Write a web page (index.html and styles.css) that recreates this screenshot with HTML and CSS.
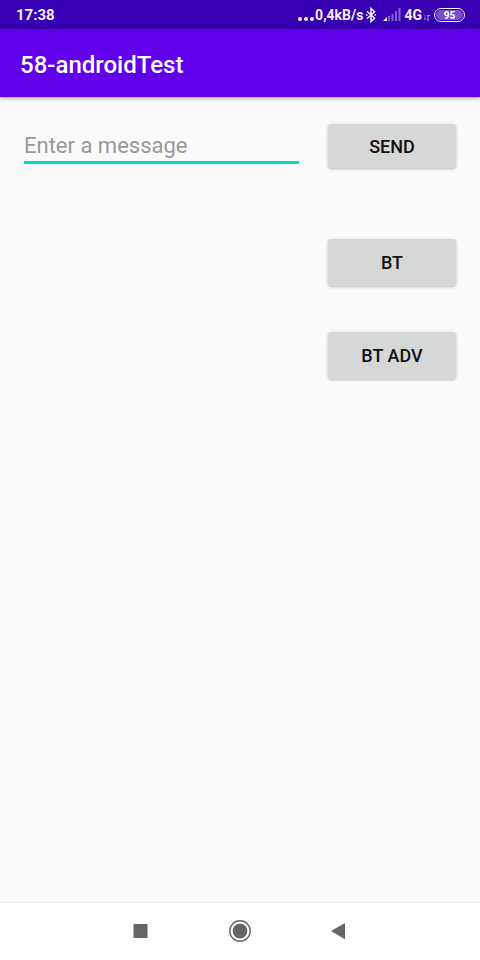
FILE: index.html
```html
<!DOCTYPE html>
<html lang="en">
<head>
<meta charset="utf-8">
<meta name="viewport" content="width=device-width, initial-scale=1">
<title>58-androidTest</title>
<link rel="stylesheet" href="styles.css">
</head>
<body>
<div class="status-bar">
  <span class="clock">17:38</span>
  <div class="indicators">
    <svg class="dots" width="16" height="6" viewBox="0 0 16 6" aria-hidden="true"><circle cx="2" cy="3" r="2"/><circle cx="8" cy="3" r="2"/><circle cx="14" cy="3" r="2"/></svg>
    <span>0,4kB/s</span>
    <svg class="bluetooth" width="10" height="16" viewBox="0 0 10 16" aria-hidden="true"><path d="M1 4.2 8.5 11.3 5 14.6V1.4l3.5 3.3L1 11.8"/><path d="M0 8h1.6M8.4 8H10"/></svg>
    <svg class="signal" width="18" height="13" viewBox="0 0 18 13" aria-hidden="true"><path d="M0 13 4 9v4z"/><path class="dim" d="M5 8h2v5H5zM8.500 6h2v7h-2zM12 3h2v10h-2zM15.500 0h2v13h-2z"/></svg>
    <span>4G</span>
    <svg class="traffic" width="6" height="7" viewBox="0 0 6 7" aria-hidden="true"><path class="dim" d="M1 1v5M0 5h2"/><path d="M4 7V1.5M3.5 1.5H6"/></svg>
    <span class="battery"><span class="battery-level">95</span></span>
  </div>
</div>
<header class="app-bar"><h1>58-androidTest</h1></header>
<main>
  <form class="message-row">
    <input class="message" type="text" placeholder="Enter a message" aria-label="Enter a message">
    <button class="send" type="button">SEND</button>
  </form>
  <div class="actions">
    <button type="button">BT</button>
    <button type="button">BT ADV</button>
  </div>
</main>
<nav class="system-nav" aria-label="System">
  <button type="button" aria-label="Recent apps"><svg width="24" height="24" viewBox="0 0 24 24"><path d="M4.500 5h14v14h-14z"/></svg></button>
  <button type="button" aria-label="Home"><svg width="24" height="24" viewBox="0 0 24 24"><circle cx="12" cy="12" r="7.4"/><circle class="ring" cx="12" cy="12" r="10.2"/></svg></button>
  <button type="button" aria-label="Back"><svg width="24" height="24" viewBox="0 0 24 24"><path d="M4 12 18 4v16.2z"/></svg></button>
</nav>
</body>
</html>
```
FILE: styles.css
```css
* {
  box-sizing: border-box;
}

body {
  display: flex;
  flex-direction: column;
  min-height: 100vh;
  margin: 0;
  background: #fafafa;
  color: #111;
  font-family: Roboto, "Liberation Sans", sans-serif;
}

.status-bar {
  display: flex;
  justify-content: space-between;
  align-items: center;
  height: 29px;
  padding: 0 15px 0 16px;
  background: #3700b3;
  color: #f3effb;
  font-size: 14px;
  font-weight: 700;
  line-height: 30px;
}

.clock {
  font-size: 15px;
}

.indicators {
  display: flex;
  align-items: center;
}

.indicators svg {
  fill: #f3effb;
}

.indicators .dim {
  opacity: 0.4;
}

.dots {
  margin: 8px 1px 0 0;
}

.bluetooth {
  margin: 0 7px 0 3px;
}

.bluetooth path {
  fill: none;
  stroke: #f3effb;
  stroke-width: 1.5;
}

.signal {
  margin-right: 3px;
}

.traffic {
  margin: 6px 4px 0 2px;
}

.traffic path {
  fill: none;
  stroke: #f3effb;
  opacity: 0.7;
}

.battery {
  display: flex;
  width: 31px;
  height: 14px;
  padding: 1px;
  border: 1px solid #f3effb;
  border-radius: 7px;
}

.battery-level {
  flex: 1;
  border-radius: 5px;
  background: #7950cc;
  color: #fff;
  font-size: 10px;
  font-weight: 700;
  line-height: 11px;
  text-align: center;
}

.app-bar {
  display: flex;
  align-items: center;
  height: 68px;
  padding: 3px 20px 0;
  background: #6200ee;
  box-shadow: 0 1px 4px rgba(0, 0, 0, 0.4);
  color: #fff;
}

h1 {
  margin: 0;
  font-size: 24px;
  font-weight: 500;
}

main {
  flex: 1;
  padding: 27px 24px;
}

.message-row {
  display: flex;
  align-items: flex-start;
  gap: 29px;
}

.message {
  flex: 1;
  min-width: 0;
  height: 40px;
  padding: 6px 0 0;
  border: 0;
  border-bottom: 3px solid #03dac5;
  border-radius: 0;
  outline: 0;
  background: transparent;
  color: #111;
  font: 400 22px Roboto, "Liberation Sans", sans-serif;
}

.message::placeholder {
  color: #999;
  opacity: 1;
}

main button {
  width: 128px;
  height: 47px;
  padding: 0;
  border: 0;
  border-radius: 3px;
  background: #d6d7d7;
  box-shadow: 0 1px 3px rgba(0, 0, 0, 0.25);
  color: #111;
  font: 500 18px Roboto, "Liberation Sans", sans-serif;
}

main .send {
  height: 44px;
}

.actions {
  display: flex;
  flex-direction: column;
  align-items: flex-end;
  gap: 46px;
  margin-top: 71px;
}

.system-nav {
  display: flex;
  justify-content: center;
  gap: 75px;
  height: 58px;
  padding-top: 16px;
  border-top: 1px solid #eee;
  background: #fff;
}

.system-nav button {
  width: 24px;
  height: 24px;
  padding: 0;
  border: 0;
  background: none;
}

.system-nav svg {
  display: block;
  fill: #666;
}

.system-nav .ring {
  fill: none;
  stroke: #666;
  stroke-width: 1.4;
}
```
